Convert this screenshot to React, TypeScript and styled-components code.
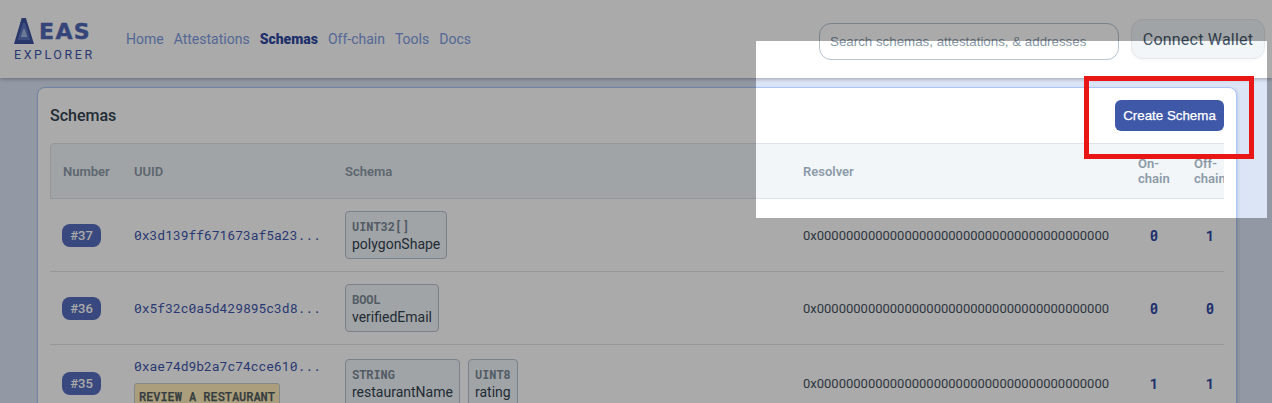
import React from "react";
import styled, { createGlobalStyle } from "styled-components";

const mono = `"Roboto Mono", "DejaVu Sans Mono", "Liberation Mono", monospace`;

const GlobalStyle = createGlobalStyle`
  * { box-sizing: border-box; }
  html, body { margin: 0; padding: 0; height: 100%; overflow: hidden; }
  body { background: #dce5f6; font-family: Roboto, sans-serif; color: #334250; }
`;

const Page = styled.div`
  position: relative;
  height: 403px;
  overflow: hidden;
  display: flex;
  flex-direction: column;
`;

const Header = styled.header`
  flex: none;
  height: 78px;
  display: flex;
  align-items: center;
  background: #fff;
  box-shadow: 0 1px 4px rgba(0, 0, 0, 0.3);
  padding: 0 7px 0 13px;
`;

const Logo = styled.div`
  width: 113px;
  height: 78px;
  padding-top: 18px;
  color: #5068b6;
`;

const LogoTop = styled.div`
  display: flex;
  height: 27px;
  gap: 5px;
`;

const LogoName = styled.span`
  font: bold 22px/27px "DejaVu Sans", sans-serif;
  letter-spacing: 1.4px;
  -webkit-text-stroke: 0.4px #5068b6;
`;

const LogoSub = styled.div`
  font-size: 12.5px;
  line-height: 19px;
  letter-spacing: 2.55px;
  padding-left: 1px;
  color: #3f58a8;
`;

const Nav = styled.nav`
  display: flex;
  gap: 10px;
  flex: 1;
  white-space: nowrap;
`;

const NavLink = styled.a<{ $active?: boolean }>`
  font-size: 14px;
  line-height: 20px;
  font-weight: ${(p) => (p.$active ? 900 : 400)};
  color: ${(p) => (p.$active ? "#2f489f" : "#809be2")};
`;

const Search = styled.input`
  width: 300px;
  height: 37px;
  margin: 4px 12px 0 0;
  padding: 0 10px;
  border: 1px solid #b6c4d0;
  border-radius: 12px;
  background: transparent;
  font: 13.33px "Liberation Sans", Arial, sans-serif;
  &::placeholder { color: #8797a6; opacity: 1; }
`;

const WalletButton = styled.button`
  width: 134px;
  height: 40px;
  padding: 0;
  border: 1px solid #e3e9ed;
  border-radius: 12px;
  background: #f2f6f9;
  color: #47596b;
  font: 400 16px Roboto, sans-serif;
  letter-spacing: 0.22px;
  box-shadow: 0 2px 3px rgba(0, 0, 0, 0.03);
`;

const Card = styled.main`
  flex: none;
  width: 1200px;
  height: 345px;
  margin: 9px 0 0 37px;
  padding: 0 12px;
  background: #fff;
  border: 1px solid #abc6f5;
  border-radius: 8px;
  box-shadow: 1px 1px 3px rgba(60, 90, 160, 0.2);
`;

const CardHead = styled.div`
  display: flex;
  align-items: center;
  justify-content: space-between;
  height: 55px;
`;

const Title = styled.h1`
  margin: 0;
  font-size: 16px;
  font-weight: 500;
  color: #334250;
`;

const CreateButton = styled.button`
  width: 109px;
  height: 31px;
  padding: 0;
  border: 0;
  border-radius: 6px;
  background: #3f58a8;
  color: #fff;
  font: 13.33px "Liberation Sans", Arial, sans-serif;
  -webkit-text-stroke: 0.25px #fff;
`;

const Table = styled.div`
  overflow: hidden;
  width: 1174px;
`;

const Row = styled.div<{ $height: number }>`
  display: grid;
  grid-template-columns: 72px 211px 458px 335px 56px 56px;
  align-items: center;
  width: 1188px;
  height: ${(p) => p.$height}px;
  padding-left: 12px;
  border-bottom: 1px solid #dde3e8;
  font-size: 13px;
`;

const HeadRow = styled(Row)`
  border: 1px solid #dde3e8;
  border-top-left-radius: 4px;
  background: #f2f6f9;
  color: #8c9aa8;
  font-weight: 600;
  line-height: 15px;
  grid-template-columns: 71px 211px 458px 335px 56px 56px;
`;

const HeadCell = styled.span<{ $narrow?: boolean }>`
  width: ${(p) => (p.$narrow ? "36px" : "auto")};
`;

const Badge = styled.span`
  display: flex;
  align-items: center;
  justify-content: center;
  width: 39px;
  height: 23px;
  border-radius: 8px;
  background: #566dbd;
  color: #fff;
  font-weight: 500;
`;

const UidCell = styled.div`
  display: flex;
  flex-direction: column;
  align-items: flex-start;
  gap: 8px;
`;

const Uid = styled.a`
  font: 13px/18px ${mono};
  letter-spacing: -0.02px;
  color: #3c55ac;
`;

const NameTag = styled.span`
  height: 26px;
  padding: 0 4px;
  border: 1px solid #c3ccd0;
  border-radius: 3px;
  background: #ffeebb;
  color: #4f5b60;
  font: 500 12px/24px ${mono};
  letter-spacing: -0.05px;
  -webkit-text-stroke: 0.25px #4f5b60;
  white-space: nowrap;
`;

const Fields = styled.div`
  display: flex;
  gap: 8px;
`;

const Field = styled.div<{ $width: number }>`
  width: ${(p) => p.$width}px;
  height: 48px;
  padding: 6px 6px 0;
  border: 1px solid #b6c2d0;
  border-radius: 4px;
  background: #f2f6f9;
`;

const FieldType = styled.div`
  font: 700 12px/17px ${mono};
  letter-spacing: -0.05px;
  color: #7c8a98;
`;

const FieldName = styled.div`
  font-size: 14px;
  line-height: 17px;
  padding-top: 1px;
  color: #334250;
`;

const Resolver = styled.span`
  color: #47535f;
  font-size: 13px;
`;

const Count = styled.span`
  width: 32px;
  padding-top: 1px;
  text-align: center;
  font: 700 14px/18px ${mono};
  color: #2f48a4;
`;

const Spotlight = styled.div`
  position: absolute;
  left: 756px;
  top: 41px;
  width: 511px;
  height: 177px;
  box-shadow: 0 0 0 1400px rgba(0, 0, 0, 0.333);
  pointer-events: none;
`;

const Highlight = styled.div`
  position: absolute;
  left: 1084px;
  top: 76px;
  width: 170px;
  height: 83px;
  border: 5px solid #e91616;
  pointer-events: none;
`;

const ZERO_ADDRESS = "0x" + "0".repeat(40);

type Schema = {
  id: number;
  uid: string;
  tag?: string;
  height: number;
  fields: { type: string; name: string; width: number }[];
  onchain: number;
  offchain: number;
};

const schemas: Schema[] = [
  { id: 37, uid: "0x3d139ff671673af5a23...", height: 73, fields: [{ type: "UINT32[]", name: "polygonShape", width: 102 }], onchain: 0, offchain: 1 },
  { id: 36, uid: "0x5f32c0a5d429895c3d8...", height: 73, fields: [{ type: "BOOL", name: "verifiedEmail", width: 94 }], onchain: 0, offchain: 0 },
  {
    id: 35, uid: "0xae74d9b2a7c74cce610...", tag: "REVIEW A RESTAURANT", height: 77,
    fields: [{ type: "STRING", name: "restaurantName", width: 115 }, { type: "UINT8", name: "rating", width: 50 }],
    onchain: 1, offchain: 1,
  },
];

const links = ["Home", "Attestations", "Schemas", "Off-chain", "Tools", "Docs"];

export default function App() {
  return (
    <Page>
      <GlobalStyle />
      <Header>
        <Logo>
          <LogoTop>
            <svg width="21" height="26" viewBox="0 0 21 26">
              <path d="M8.7 0h4.2L21 26H1z" fill="#3c519f" />
              <path d="M9.8 5h2.4l5 17H4.8z" fill="#5e77bf" />
              <path d="M10.4 11h1.2L14.4 19H7.8z" fill="#a3b6e3" />
            </svg>
            <LogoName>EAS</LogoName>
          </LogoTop>
          <LogoSub>EXPLORER</LogoSub>
        </Logo>
        <Nav>
          {links.map((l) => (
            <NavLink key={l} $active={l === "Schemas"}>{l}</NavLink>
          ))}
        </Nav>
        <Search placeholder="Search schemas, attestations, & addresses" />
        <WalletButton>Connect Wallet</WalletButton>
      </Header>
      <Card>
        <CardHead>
          <Title>Schemas</Title>
          <CreateButton>Create Schema</CreateButton>
        </CardHead>
        <Table>
          <HeadRow $height={56}>
            <HeadCell>Number</HeadCell>
            <HeadCell>UUID</HeadCell>
            <HeadCell>Schema</HeadCell>
            <HeadCell>Resolver</HeadCell>
            <HeadCell $narrow>On-chain</HeadCell>
            <HeadCell $narrow>Off-chain</HeadCell>
          </HeadRow>
          {schemas.map((s) => (
            <Row key={s.id} $height={s.height}>
              <Badge>#{s.id}</Badge>
              <UidCell>
                <Uid>{s.uid}</Uid>
                {s.tag && <NameTag>{s.tag}</NameTag>}
              </UidCell>
              <Fields>
                {s.fields.map((f) => (
                  <Field key={f.name} $width={f.width}>
                    <FieldType>{f.type}</FieldType>
                    <FieldName>{f.name}</FieldName>
                  </Field>
                ))}
              </Fields>
              <Resolver>{ZERO_ADDRESS}</Resolver>
              <Count>{s.onchain}</Count>
              <Count>{s.offchain}</Count>
            </Row>
          ))}
        </Table>
      </Card>
      <Spotlight />
      <Highlight />
    </Page>
  );
}
